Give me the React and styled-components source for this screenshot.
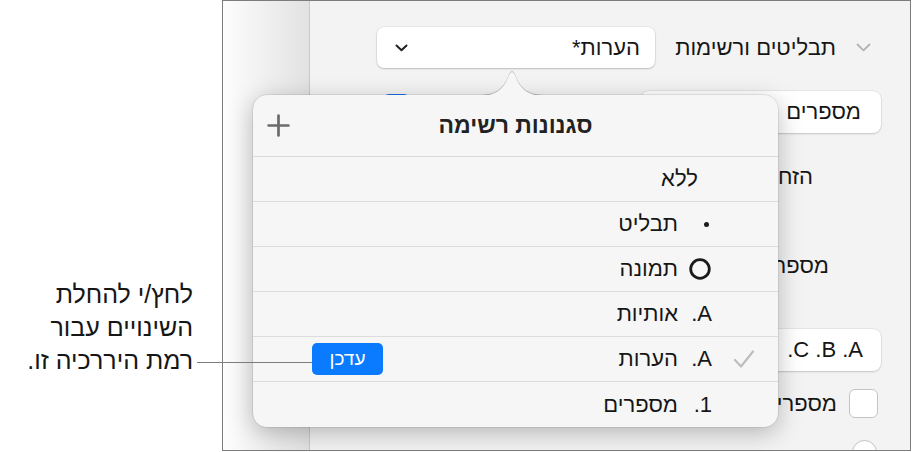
import React from 'react';
import styled, { createGlobalStyle } from 'styled-components';

const GlobalStyle = createGlobalStyle`
  html, body { margin: 0; padding: 0; background: #ffffff; }
  body {
    font-family: "Liberation Sans", Arial, sans-serif;
    color: #161616;
  }
`;

const Page = styled.div`
  position: relative;
  width: 912px;
  height: 452px;
  display: flex;
  overflow: hidden;
  background: #ffffff;
`;

const Callout = styled.div`
  flex: none;
  width: 222px;
  box-sizing: border-box;
  padding: 278px 29px 0 0;
  direction: rtl;
  text-align: start;
  font-size: 25px;
  line-height: 33px;
  color: #161616;
  white-space: nowrap;
`;

const Leader = styled.div`
  position: absolute;
  left: 197px;
  top: 362px;
  width: 115px;
  height: 1px;
  background: #7d7d7d;
  z-index: 5;
`;

const Frame = styled.div`
  position: relative;
  flex: none;
  width: 689px;
  height: 451px;
  box-sizing: border-box;
  border: 1px solid #7c7c7c;
  display: flex;
`;

const Sidebar = styled.div`
  flex: none;
  width: 86px;
  background: linear-gradient(to right, #fdfdfd, #e2e2e2);
  border-right: 1px solid #c9c9c9;
`;

const Panel = styled.div`
  flex: 1;
  background: #f3f3f3;
  direction: rtl;
  box-sizing: border-box;
  padding: 0 29px 0 67px;
  display: flex;
  flex-direction: column;
  font-size: 22px;
  overflow: hidden;
`;

const PanelRow = styled.div`
  display: flex;
  align-items: center;
  flex: none;
  margin-top: ${p => p.$top}px;
  height: ${p => p.$h}px;
`;

const Disclosure = styled.svg`
  flex: none;
  width: 15px;
  height: 9px;
  margin-right: 10px;
`;

const SectionTitle = styled.div`
  margin-right: 20px;
  font-size: 22px;
  white-space: nowrap;
`;

const PopupButton = styled.div`
  margin-right: auto;
  width: ${p => p.$w}px;
  height: 100%;
  box-sizing: border-box;
  background: #ffffff;
  border-radius: 7px;
  box-shadow: 0 0 0 0.5px rgba(0, 0, 0, 0.1), 0 1px 2px rgba(0, 0, 0, 0.18);
  display: flex;
  align-items: center;
  justify-content: space-between;
  padding: 0 15px 0 18px;
  font-size: 22px;
`;

const FieldButton = styled.div`
  width: ${p => p.$w}px;
  height: 100%;
  box-sizing: border-box;
  background: #ffffff;
  border-radius: 8px;
  box-shadow: 0 0 0 0.5px rgba(0, 0, 0, 0.1), 0 1px 2px rgba(0, 0, 0, 0.15);
  display: flex;
  align-items: center;
  padding-right: ${p => p.$pad}px;
  font-size: 22px;
  white-space: nowrap;
`;

const BlueBox = styled.div`
  margin-right: auto;
  margin-left: 6px;
  align-self: flex-start;
  margin-top: 3px;
  width: 27px;
  height: 27px;
  border-radius: 6px;
  background: #1a74f0;
`;

const PanelLabel = styled.div`
  margin-right: ${p => p.$inset}px;
  font-size: 22px;
  white-space: nowrap;
`;

const Check = styled.div`
  flex: none;
  width: 29px;
  height: 29px;
  margin-right: 3px;
  box-sizing: border-box;
  background: #ffffff;
  border: 1px solid #c4c4c4;
  border-radius: 6px;
`;

const Radio = styled.div`
  flex: none;
  width: 25px;
  height: 25px;
  margin-right: 4px;
  box-sizing: border-box;
  background: #ffffff;
  border: 1px solid #c4c4c4;
  border-radius: 50%;
`;

const Popover = styled.div`
  position: absolute;
  left: 30px;
  top: 94px;
  width: 525px;
  height: 332px;
  box-sizing: border-box;
  background: #f6f6f6;
  border-radius: 14px;
  box-shadow: 0 0 0 0.5px rgba(0, 0, 0, 0.14), 0 6px 24px rgba(0, 0, 0, 0.26);
  display: flex;
  flex-direction: column;
  z-index: 3;
`;

const Arrow = styled.svg`
  position: absolute;
  left: 224px;
  top: -25px;
  width: 70px;
  height: 26px;
  filter: drop-shadow(0 -0.5px 0.6px rgba(0, 0, 0, 0.22));
`;

const PopHeader = styled.div`
  height: 61px;
  flex: none;
  display: grid;
  grid-template-columns: 60px 1fr 60px;
  align-items: center;
  border-bottom: 1px solid #dadada;
`;

const PlusIcon = styled.svg`
  width: 25px;
  height: 25px;
  margin-left: 13px;
`;

const PopTitle = styled.div`
  text-align: center;
  font-weight: 700;
  font-size: 23px;
  color: #222222;
  direction: rtl;
`;

const StyleRow = styled.div`
  flex: none;
  height: 45px;
  box-sizing: border-box;
  direction: rtl;
  display: flex;
  align-items: center;
  padding: 0 23px 0 59px;
  border-bottom: ${p => (p.$last ? 'none' : '1px solid #dcdcdc')};
  font-size: 22px;
`;

const CheckCell = styled.div`
  flex: none;
  width: 22px;
  height: 22px;
  display: flex;
  align-items: center;
  justify-content: center;
`;

const Marker = styled.div`
  flex: none;
  width: 30px;
  margin-right: 21px;
  display: flex;
  justify-content: flex-start;
  align-items: center;
  white-space: nowrap;
`;

const Dot = styled.span`
  width: 5px;
  height: 5px;
  margin-right: 3px;
  border-radius: 50%;
  background: #1d1d1f;
`;

const StyleLabel = styled.div`
  margin-right: ${p => p.$inset}px;
  white-space: nowrap;
`;

const UpdateButton = styled.div`
  margin-right: auto;
  width: 71px;
  height: 32px;
  border-radius: 5px;
  background: #0a7aff;
  color: #ffffff;
  font-size: 19px;
  display: flex;
  align-items: center;
  justify-content: center;
`;

const styles = [
  { label: 'ללא', marker: null },
  { label: 'תבליט', marker: 'dot' },
  { label: 'תמונה', marker: 'ring' },
  { label: 'אותיות', marker: 'A.' },
  { label: 'הערות', marker: 'A.', checked: true, update: true },
  { label: 'מספרים', marker: '1.' },
];

function MarkerGlyph({ kind }) {
  if (kind === 'dot') return <Dot />;
  if (kind === 'ring')
    return (
      <svg width="24" height="24" viewBox="0 0 24 24">
        <circle cx="12" cy="12" r="9.3" fill="none" stroke="#1a1a1a" strokeWidth="2.8" />
      </svg>
    );
  return <span>{kind}</span>;
}

export default function App() {
  return (
    <>
      <GlobalStyle />
      <Page>
        <Callout>
          לחץ/י להחלת
          <br />
          השינויים עבור
          <br />
          רמת היררכיה זו.
        </Callout>
        <Leader />
        <Frame>
          <Sidebar />
          <Panel>
            <PanelRow $top={26} $h={41}>
              <Disclosure viewBox="0 0 15 9">
                <path d="M1.5 1.5 L7.5 7.3 L13.5 1.5" fill="none" stroke="#b3b3b3" strokeWidth="1.8" strokeLinecap="round" strokeLinejoin="round" />
              </Disclosure>
              <SectionTitle>תבליטים ורשימות</SectionTitle>
              <PopupButton $w={278}>
                <span>הערות*</span>
                <svg width="13" height="8" viewBox="0 0 13 8">
                  <path d="M1.5 1.5 L6.5 6.3 L11.5 1.5" fill="none" stroke="#222" strokeWidth="2" strokeLinecap="round" strokeLinejoin="round" />
                </svg>
              </PopupButton>
            </PanelRow>
            <PanelRow $top={23} $h={42}>
              <FieldButton $w={240} $pad={20}>מספרים</FieldButton>
              <BlueBox />
            </PanelRow>
            <PanelRow $top={33} $h={22}>
              <PanelLabel $inset={68}>הזחה</PanelLabel>
            </PanelRow>
            <PanelRow $top={67} $h={22}>
              <PanelLabel $inset={52}>מספרים</PanelLabel>
            </PanelRow>
            <PanelRow $top={52} $h={42}>
              <FieldButton $w={240} $pad={18}>{'A.\u200F B.\u200F C.\u200F'}</FieldButton>
            </PanelRow>
            <PanelRow $top={18} $h={29}>
              <Check />
              <PanelLabel $inset={12}>מספרים</PanelLabel>
            </PanelRow>
            <PanelRow $top={22} $h={25}>
              <Radio />
            </PanelRow>
          </Panel>
          <Popover>
            <Arrow viewBox="0 0 70 26">
              <path d="M0 26 C 20 26 27 19 32 5 Q 35 -1 38 5 C 43 19 50 26 70 26 Z" fill="#f6f6f6" />
            </Arrow>
            <PopHeader>
              <PlusIcon viewBox="0 0 24 24">
                <path d="M12 2.5 V21.5 M2.5 12 H21.5" stroke="#6b6b6b" strokeWidth="2.6" strokeLinecap="round" />
              </PlusIcon>
              <PopTitle>סגנונות רשימה</PopTitle>
              <span />
            </PopHeader>
            {styles.map((s, i) => (
              <StyleRow key={s.label} $last={i === styles.length - 1}>
                <CheckCell>
                  {s.checked && (
                    <svg width="22" height="20" viewBox="0 0 22 20">
                      <path d="M2 11 L8 17.5 L20 2.5" fill="none" stroke="#bdbdbd" strokeWidth="2.2" strokeLinecap="round" strokeLinejoin="round" />
                    </svg>
                  )}
                </CheckCell>
                {s.marker && (
                  <Marker>
                    <MarkerGlyph kind={s.marker} />
                  </Marker>
                )}
                <StyleLabel $inset={s.marker ? 4 : 35}>{s.label}</StyleLabel>
                {s.update && <UpdateButton>עדכן</UpdateButton>}
              </StyleRow>
            ))}
          </Popover>
        </Frame>
      </Page>
    </>
  );
}
